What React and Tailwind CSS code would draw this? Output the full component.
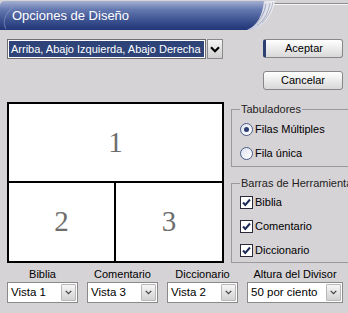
import React from "react";

function TitleBar() {
  return (
    <div className="relative h-[31px] w-[348px]">
      <svg className="absolute left-0 top-0" width="348" height="31" viewBox="0 0 348 31">
        <defs>
          <linearGradient id="tbg" x1="0" y1="0" x2="0" y2="1">
            <stop offset="0" stopColor="#a4b0d2" />
            <stop offset="0.3" stopColor="#6478b0" />
            <stop offset="0.7" stopColor="#3a4f8e" />
            <stop offset="1" stopColor="#223577" />
          </linearGradient>
          <linearGradient id="stg" x1="0" y1="0" x2="1" y2="0">
            <stop offset="0" stopColor="#b8bfd6" />
            <stop offset="1" stopColor="#f2f2f4" />
          </linearGradient>
        </defs>
        <line x1="270" y1="3.5" x2="348" y2="3.5" stroke="#8f8d8f" />
        <line x1="270" y1="4.5" x2="348" y2="4.5" stroke="#f6f6f6" />
        <path d="M258,1 L275,1 Q271,22 254,30 L244,30 Z" fill="url(#stg)" />
        <path d="M266,4 Q264,18 252,27" stroke="#9ea6c2" strokeWidth="1" fill="none" />
        <path d="M270,3 Q268,17 257,26" stroke="#a8adc0" strokeWidth="1" fill="none" />
        <path d="M273,2 Q271,14 262,23" stroke="#b0b4c4" strokeWidth="1" fill="none" />
        <path d="M0,6 Q0,1 5,1 L264,1 Q262,23 247,30 L0,30 Z" fill="url(#tbg)" />
        <path d="M6,29 Q0,18 14,6" stroke="#8d9cc8" strokeOpacity="0.5" strokeWidth="1.2" fill="none" />
      </svg>
      <div className="relative pl-[12px] pt-[7px] text-[13px] leading-[17px] text-white">
        Opciones de Diseño
      </div>
    </div>
  );
}

function Chevron({ size = 9, stroke = "#111", sw = 2 }) {
  return (
    <svg width={size} height={size * 0.7} viewBox="0 0 10 7">
      <path d="M1,1.2 L5,5.2 L9,1.2" fill="none" stroke={stroke} strokeWidth={sw} />
    </svg>
  );
}

function SmallCombo({ w, value }) {
  return (
    <div className={`flex h-[21px] shrink-0 border border-[#8a8a8a] bg-white ${w}`}>
      <div className="flex-1 whitespace-nowrap pl-[3px] text-[11.5px] leading-[19px]">{value}</div>
      <div className="my-[1px] mr-[1px] flex w-[15px] items-center justify-center rounded-[1px] border border-[#b8b8b8] bg-gradient-to-b from-[#f6f6f6] to-[#d2d2d2]">
        <Chevron size={7} stroke="#444" sw={1.8} />
      </div>
    </div>
  );
}

function Radio({ checked, label }) {
  return (
    <div className="flex h-[16px] items-center">
      <div className="flex h-[13px] w-[13px] items-center justify-center rounded-full border border-[#4a5b85] bg-gradient-to-br from-[#dfe3ee] to-[#ffffff]">
        {checked && <div className="h-[5px] w-[5px] rounded-full bg-[#2b3d73]" />}
      </div>
      <span className="ml-[2px] text-[11px]">{label}</span>
    </div>
  );
}

function Check({ label }) {
  return (
    <div className="flex h-[16px] items-center">
      <div className="flex h-[13px] w-[13px] items-center justify-center border border-[#2a2a3a] bg-white">
        <svg width="9" height="9" viewBox="0 0 9 9">
          <path d="M1,4.5 L3.3,7 L8,1.5" fill="none" stroke="#1f2c58" strokeWidth="2" />
        </svg>
      </div>
      <span className="ml-[2px] text-[11px]">{label}</span>
    </div>
  );
}

export default function App() {
  return (
    <div className="h-[313px] w-[348px] overflow-hidden bg-[#d6d3d6] font-['Liberation_Sans',Arial,sans-serif] text-black">
      <TitleBar />
      <div className="pl-[7px]">
        <div className="mt-[8px] flex">
          <div className="flex w-[216px] shrink-0">
            <div className="h-[20px] w-[199px] border border-[#6e6e6e] bg-white p-[1px]">
              <div className="h-full whitespace-nowrap bg-[#2e4479] pl-[2px] text-[11px] leading-[16px] text-white">
                Arriba, Abajo Izquierda, Abajo Derecha
              </div>
            </div>
            <div className="ml-[1px] flex h-[20px] w-[16px] items-center justify-center border border-[#8a8a8a] bg-gradient-to-b from-[#f4f4f4] to-[#cfcfcf]">
              <Chevron size={10} stroke="#000" sw={2.2} />
            </div>
          </div>
          <div className="ml-[40px] flex shrink-0 flex-col gap-[13px]">
            <button className="flex h-[19px] w-[80px] items-center justify-center rounded-[3px] border border-[#878787] border-l-[3px] border-l-[#2d4070] bg-gradient-to-b from-[#ffffff] to-[#d8d8d8] text-[11px] leading-none">
              Aceptar
            </button>
            <button className="flex h-[19px] w-[80px] items-center justify-center rounded-[3px] border border-[#878787] bg-gradient-to-b from-[#ffffff] to-[#d8d8d8] text-[11px] leading-none">
              Cancelar
            </button>
          </div>
        </div>

        <div className="mt-[12px] flex">
          <div className="flex h-[161px] w-[217px] shrink-0 flex-col border-2 border-black bg-white font-['Liberation_Serif',serif] text-[29px] text-[#6e6e6e]">
            <div className="flex h-[79px] items-center justify-center border-b-2 border-black">1</div>
            <div className="flex flex-1">
              <div className="flex w-[107px] items-center justify-center border-r-2 border-black">2</div>
              <div className="flex flex-1 items-center justify-center">3</div>
            </div>
          </div>
          <div className="ml-[7px] flex w-[140px] shrink-0 flex-col">
            <fieldset className="h-[65px] border border-r-0 border-[#9c999c] pl-[8px]">
              <legend className="px-[1px] text-[11px] leading-[14px] text-[#222]">Tabuladores</legend>
              <div className="mt-[5px] flex flex-col gap-[8px]">
                <Radio checked label="Filas Múltiples" />
                <Radio label="Fila única" />
              </div>
            </fieldset>
            <fieldset className="mt-[9px] h-[87px] border border-r-0 border-[#9c999c] pl-[8px]">
              <legend className="whitespace-nowrap px-[1px] text-[11px] leading-[14px] text-[#222]">
                Barras de Herramientas
              </legend>
              <div className="mt-[4px] flex flex-col gap-[8px]">
                <Check label="Biblia" />
                <Check label="Comentario" />
                <Check label="Diccionario" />
              </div>
            </fieldset>
          </div>
        </div>

        <div className="mt-[3px] flex gap-[9px] text-[11px]">
          <div className="flex w-[71px] shrink-0 flex-col items-center">
            <span className="leading-[16px]">Biblia</span>
            <SmallCombo w="w-[71px]" value="Vista 1" />
          </div>
          <div className="flex w-[71px] shrink-0 flex-col items-center">
            <span className="leading-[16px]">Comentario</span>
            <SmallCombo w="w-[71px]" value="Vista 3" />
          </div>
          <div className="flex w-[71px] shrink-0 flex-col items-center">
            <span className="leading-[16px]">Diccionario</span>
            <SmallCombo w="w-[71px]" value="Vista 2" />
          </div>
          <div className="flex w-[96px] shrink-0 flex-col items-center">
            <span className="whitespace-nowrap leading-[16px]">Altura del Divisor</span>
            <SmallCombo w="w-[96px]" value="50 por ciento" />
          </div>
        </div>
      </div>
    </div>
  );
}
